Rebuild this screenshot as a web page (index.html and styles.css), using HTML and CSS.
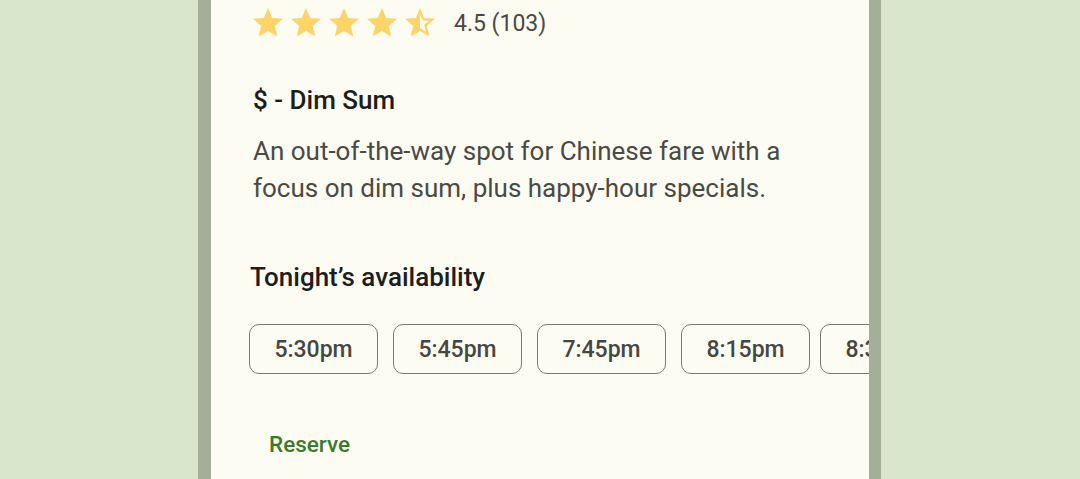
FILE: index.html
```html
<!DOCTYPE html>
<html>
<head>
<meta charset="utf-8">
<link rel="stylesheet" href="styles.css">
</head>
<body>
<div class="stage">
  <div class="card">
    <div class="rating">
      <div class="stars">
        <svg class="star" viewBox="0 0 24 24"><path d="M12 17.27L18.18 21l-1.64-7.03L22 9.24l-7.19-.61L12 2 9.19 8.63 2 9.24l5.46 4.73L5.82 21z"/></svg>
        <svg class="star" viewBox="0 0 24 24"><path d="M12 17.27L18.18 21l-1.64-7.03L22 9.24l-7.19-.61L12 2 9.19 8.63 2 9.24l5.46 4.73L5.82 21z"/></svg>
        <svg class="star" viewBox="0 0 24 24"><path d="M12 17.27L18.18 21l-1.64-7.03L22 9.24l-7.19-.61L12 2 9.19 8.63 2 9.24l5.46 4.73L5.82 21z"/></svg>
        <svg class="star" viewBox="0 0 24 24"><path d="M12 17.27L18.18 21l-1.64-7.03L22 9.24l-7.19-.61L12 2 9.19 8.63 2 9.24l5.46 4.73L5.82 21z"/></svg>
        <svg class="star" viewBox="0 0 24 24"><path d="M22 9.24l-7.19-.62L12 2 9.19 8.63 2 9.24l5.46 4.73L5.82 21 12 17.27 18.18 21l-1.63-7.03L22 9.24zM12 15.4V6.1l1.71 4.04 4.38.38-3.32 2.88 1 4.28L12 15.4z"/></svg>
      </div>
      <span class="score">4.5 (103)</span>
    </div>
    <h2 class="category">$ - Dim Sum</h2>
    <p class="desc">An out-of-the-way spot for Chinese fare with a focus on dim sum, plus happy-hour specials.</p>
    <h3 class="avail">Tonight’s availability</h3>
    <div class="chips">
      <div class="chip">5:30pm</div>
      <div class="chip">5:45pm</div>
      <div class="chip">7:45pm</div>
      <div class="chip">8:15pm</div>
      <div class="chip chip-last">8:30pm</div>
    </div>
    <div class="actions">
      <button class="reserve">Reserve</button>
    </div>
  </div>
</div>
</body>
</html>
```
FILE: styles.css
```css
html, body {
  margin: 0;
  padding: 0;
  height: 100%;
}
body {
  background: #dae6cb;
  font-family: Roboto, "Noto Sans", sans-serif;
  overflow: hidden;
}
.stage {
  display: flex;
  height: 100%;
  padding-left: 198px;
}
.card {
  width: 619px;
  height: 100%;
  background: #fcfcf3;
  border-left: 13px solid #a5ae99;
  border-right: 12px solid #a5ae99;
  padding: 5px 0 0 39px;
  box-sizing: content-box;
  overflow: hidden;
}
.rating {
  display: flex;
  align-items: center;
  height: 36px;
}
.stars {
  display: flex;
  gap: 2px;
}
.star {
  width: 36px;
  height: 36px;
  fill: #fdd566;
}
.score {
  margin-left: 16px;
  font-size: 23px;
  color: #4a4a44;
}
.category {
  margin: 44px 0 0 3px;
  font-size: 26px;
  font-weight: 500;
  line-height: 30px;
  color: #1d1d1b;
}
.desc {
  margin: 18px 0 0 3px;
  font-size: 26px;
  line-height: 37px;
  color: #4a4a44;
  width: 570px;
}
.avail {
  margin: 55px 0 0 0;
  font-size: 26px;
  font-weight: 500;
  line-height: 30px;
  color: #1d1d1b;
}
.chips {
  display: flex;
  gap: 15px;
  margin: 32px 0 0 -1px;
  white-space: nowrap;
}
.chip {
  flex: none;
  box-sizing: border-box;
  width: 129px;
  height: 50px;
  border: 1px solid #76776e;
  border-radius: 10px;
  display: flex;
  align-items: center;
  justify-content: center;
  font-size: 23px;
  font-weight: 500;
  color: #46473f;
}
.chip-last {
  margin-left: -5px;
}
.actions {
  margin-top: 50px;
}
.reserve {
  background: none;
  border: none;
  padding: 6px 19px;
  font-family: Roboto, "Noto Sans", sans-serif;
  font-size: 22.5px;
  font-weight: 500;
  color: #3c7a2c;
  line-height: 28px;
}
```
